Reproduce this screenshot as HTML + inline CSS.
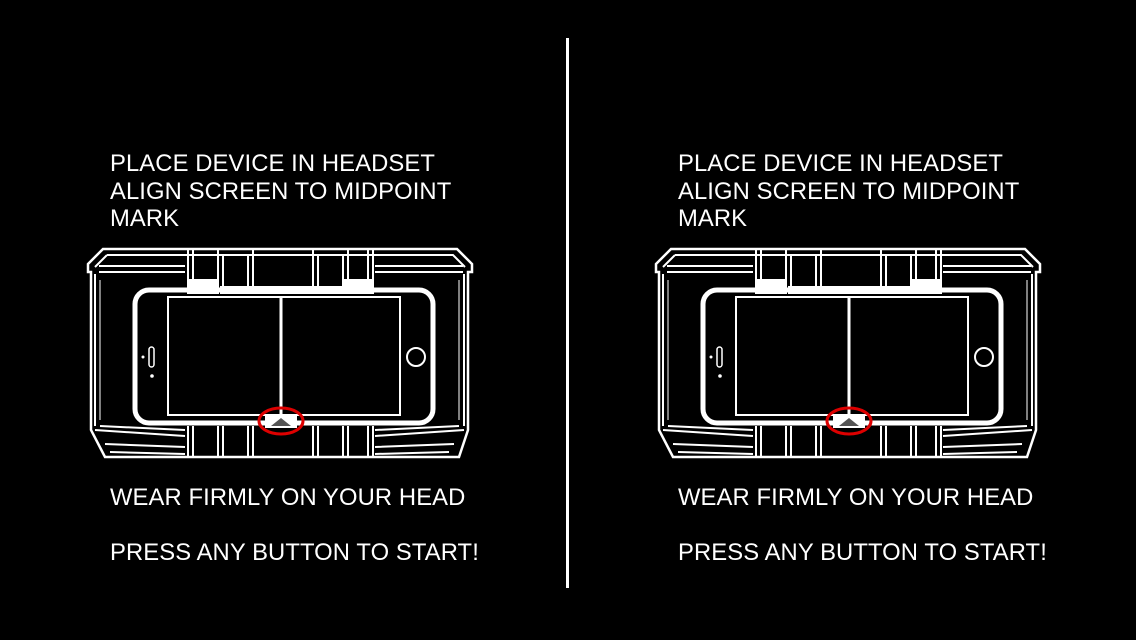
<!DOCTYPE html>
<html><head><meta charset="utf-8"><style>
html,body{margin:0;padding:0;background:#000;width:1136px;height:640px;overflow:hidden}
.t{position:absolute;color:#fff;font-family:"Liberation Sans",sans-serif;font-size:23.8px;letter-spacing:0.1px;line-height:27.5px;white-space:pre}
svg{position:absolute;left:0;top:0}
</style></head><body>
<svg width="1136" height="640" viewBox="0 0 1136 640">
<defs>
<g id="hs" fill="none" stroke="#fff" stroke-width="2">
  <path d="M18,9 H372 L387,24 V32 H383 V190 L374,217 H20 L6,190 V32 H3 V24 Z" stroke-width="2.5"/>
  <path d="M22,15 H368 L380,27 M22,15 L10,27"/>
  <path d="M14,26 H100 M14,32 H100 M290,26 H378 M290,32 H378"/>
  <path d="M10,34 V186 M379,34 V186"/>
  <path d="M15,40 V180 M374,40 V180" stroke-width="1"/>
  <path d="M10,190 L100,196 M15,186 L100,190 M20,204 L100,207 M25,212 L100,214"/>
  <path d="M379,190 L290,196 M374,186 L290,190 M369,204 L290,207 M364,212 L290,214"/>
  <path d="M103,10 V48 M108,10 V48 M133,10 V48 M138,14 V48 M163,14 V48 M168,10 V48 M228,10 V48 M233,14 V48 M258,14 V48 M263,10 V48 M283,10 V48 M288,10 V48"/>
  <path d="M103,186 V218 M108,186 V218 M133,186 V218 M138,186 V218 M163,186 V218 M168,186 V218 M228,186 V218 M233,186 V218 M258,186 V218 M263,186 V218 M283,186 V218 M288,186 V218"/>
  <rect x="103" y="40" width="30" height="13" fill="#fff"/>
  <rect x="258" y="40" width="30" height="13" fill="#fff"/>
  <rect x="136" y="47" width="122" height="6" fill="#fff"/>
  <rect x="50" y="50" width="298" height="133" rx="14" stroke-width="5"/>
  <rect x="83" y="57" width="232" height="118" stroke-width="2"/>
  <path d="M196,57 V174" stroke-width="3"/>
  <rect x="64" y="107" width="5" height="20" rx="2.5" stroke-width="1.5"/>
  <circle cx="58" cy="117" r="1.5" fill="#fff" stroke="none"/>
  <circle cx="67" cy="136" r="1.8" fill="#fff" stroke="none"/>
  <circle cx="331" cy="117" r="9" stroke-width="2"/>
  <rect x="180" y="175" width="32" height="13" fill="#fff" stroke="none"/>
  <path d="M186,186 L196,178 L206,186 Z" fill="#555" stroke="none"/>
  <ellipse cx="196" cy="181" rx="22" ry="13" stroke="#d00" stroke-width="3"/>
</g>
</defs>
<use href="#hs" x="85" y="240"/>
<use href="#hs" x="653" y="240"/>
<rect x="566" y="38" width="3" height="550" fill="#fff"/>
</svg>
<div class="t" style="left:110px;top:150px">PLACE DEVICE IN HEADSET
ALIGN SCREEN TO MIDPOINT
MARK</div>
<div class="t" style="left:110px;top:484px">WEAR FIRMLY ON YOUR HEAD</div>
<div class="t" style="left:110px;top:539px">PRESS ANY BUTTON TO START!</div>
<div class="t" style="left:678px;top:150px">PLACE DEVICE IN HEADSET
ALIGN SCREEN TO MIDPOINT
MARK</div>
<div class="t" style="left:678px;top:484px">WEAR FIRMLY ON YOUR HEAD</div>
<div class="t" style="left:678px;top:539px">PRESS ANY BUTTON TO START!</div>
</body></html>
